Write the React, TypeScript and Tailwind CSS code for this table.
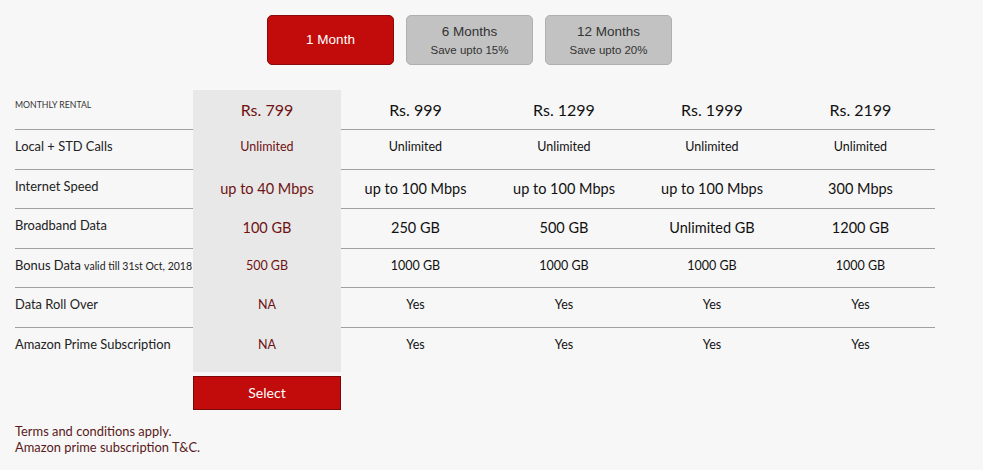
import React from "react";

const font = { fontFamily: "Lato, 'Open Sans', sans-serif" };

type Row = { label: React.ReactNode; values: string[]; size: string };

const rows: Row[] = [
  { label: "Local + STD Calls", values: ["Unlimited", "Unlimited", "Unlimited", "Unlimited", "Unlimited"], size: "text-[12.5px]" },
  { label: "Internet Speed", values: ["up to 40 Mbps", "up to 100 Mbps", "up to 100 Mbps", "up to 100 Mbps", "300 Mbps"], size: "text-[14.5px]" },
  { label: "Broadband Data", values: ["100 GB", "250 GB", "500 GB", "Unlimited GB", "1200 GB"], size: "text-[14.5px]" },
  {
    label: (
      <span>
        Bonus Data <span className="text-[10.5px]">valid till 31st Oct, 2018</span>
      </span>
    ),
    values: ["500 GB", "1000 GB", "1000 GB", "1000 GB", "1000 GB"],
    size: "text-[12.5px]",
  },
  { label: "Data Roll Over", values: ["NA", "Yes", "Yes", "Yes", "Yes"], size: "text-[12.5px]" },
  { label: "Amazon Prime Subscription", values: ["NA", "Yes", "Yes", "Yes", "Yes"], size: "text-[12.5px]" },
];

const prices = ["Rs. 799", "Rs. 999", "Rs. 1299", "Rs. 1999", "Rs. 2199"];

export default function App() {
  return (
    <div className="w-[983px] h-[470px] bg-[#f7f7f7] text-[#222] overflow-hidden" style={font}>
      <div className="flex gap-[12px] pl-[267px] pt-[15px]" style={{ fontFamily: "'Liberation Sans', Arial, sans-serif" }}>
        <div className="w-[127px] h-[50px] rounded-[5px] bg-[#c20c0c] border border-[#8a0a0a] flex items-center justify-center text-white text-[13.5px]">
          1 Month
        </div>
        <div className="w-[127px] h-[50px] rounded-[5px] bg-[#c2c2c2] border border-[#b0b0b0] flex flex-col items-center justify-center text-[#333]">
          <span className="text-[13.5px] leading-[16px]">6 Months</span>
          <span className="text-[11.5px] leading-[14px] mt-[3px]">Save upto 15%</span>
        </div>
        <div className="w-[127px] h-[50px] rounded-[5px] bg-[#c2c2c2] border border-[#b0b0b0] flex flex-col items-center justify-center text-[#333]">
          <span className="text-[13.5px] leading-[16px]">12 Months</span>
          <span className="text-[11.5px] leading-[14px] mt-[3px]">Save upto 20%</span>
        </div>
      </div>

      <div className="ml-[15px] mt-[25px] w-[920px]">
        {/* header row */}
        <div className="grid grid-cols-[178px_148px_149px_148px_148px_149px] h-[40px]">
          <div className="border-b border-[#a0a0a0] text-[8.7px] uppercase pt-[8px] text-[#333]">Monthly Rental</div>
          {prices.map((p, i) => (
            <div
              key={p}
              className={
                i === 0
                  ? "bg-[#e8e8e8] flex justify-center pt-[8px] text-[16px] text-[#6e1212]"
                  : "border-b border-[#a0a0a0] flex justify-center pt-[8px] text-[16px] text-[#111]"
              }
            >
              {p}
            </div>
          ))}
        </div>
        {rows.map((r, ri) => {
          const last = ri === rows.length - 1;
          return (
            <div key={ri} className={"grid grid-cols-[178px_148px_149px_148px_148px_149px] " + (last ? "h-[44px]" : "h-[39.6px]")}>
              <div className={(last ? "" : "border-b border-[#a0a0a0] ") + "text-[12.9px] pt-[7px] whitespace-nowrap"}>{r.label}</div>
              {r.values.map((v, i) => (
                <div
                  key={i}
                  className={
                    (i === 0
                      ? "bg-[#e8e8e8] text-[#6e1212] "
                      : (last ? "" : "border-b border-[#a0a0a0] ") + "text-[#111] ") +
                    "flex justify-center pt-[8px] " +
                    r.size
                  }
                >
                  {v}
                </div>
              ))}
            </div>
          );
        })}
        <div className="ml-[178px] mt-[4px] w-[148px] h-[34px] bg-[#c20c0c] border border-[#7a0a0a] flex items-center justify-center text-white text-[14px]">
          Select
        </div>
        <div className="mt-[13px] text-[12.9px] leading-[16.5px] text-[#5a1a1a]">
          <div>Terms and conditions apply.</div>
          <div>Amazon prime subscription T&amp;C.</div>
        </div>
      </div>
    </div>
  );
}
